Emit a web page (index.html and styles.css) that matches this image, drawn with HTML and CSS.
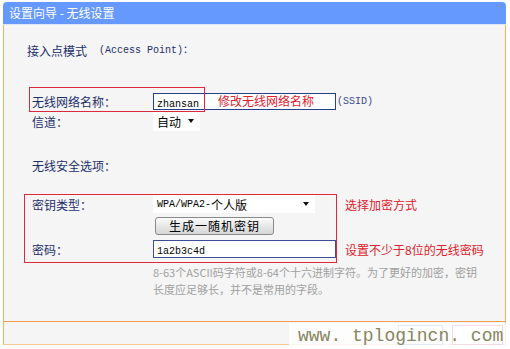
FILE: index.html
```html
<!DOCTYPE html>
<html lang="zh-CN">
<head>
    <meta charset="UTF-8">
    <title>设置向导 - 无线设置</title>
    <link rel="stylesheet" href="styles.css">
</head>
<body>
    <div class="window">
        <div class="titlebar">设置向导 - 无线设置</div>

        <div class="panel">
            <p class="heading">接入点模式 <span class="mono ap">(Access Point)：</span></p>

            <div class="row row-ssid">
                <span class="label">无线网络名称：</span>
                <div class="field">
                    <div class="input input-ssid"><span class="mono">zhansan</span></div>
                    <span class="note note-over">修改无线网络名称</span>
                </div>
                <span class="suffix mono">(SSID)</span>
            </div>

            <div class="row row-channel">
                <span class="label">信道：</span>
                <div class="select select-small">自动 <span class="arrow"></span></div>
            </div>

            <p class="section">无线安全选项：</p>

            <div class="row row-keytype">
                <span class="label">密钥类型：</span>
                <div class="control">
                    <div class="select select-wide"><span class="mono">WPA/WPA2-</span>个人版 <span class="arrow"></span></div>
                </div>
                <span class="note">选择加密方式</span>
            </div>

            <div class="row row-button">
                <span class="label"></span>
                <button type="button" class="btn-gen">生成一随机密钥</button>
            </div>

            <div class="row row-pass">
                <span class="label">密码：</span>
                <div class="control">
                    <div class="input input-pass"><span class="mono">1a2b3c4d</span></div>
                </div>
                <span class="note">设置不少于8位的无线密码</span>
            </div>

            <p class="help">8-63个ASCII码字符或8-64个十六进制字符。为了更好的加密，密钥<br>长度应足够长，并不是常用的字段。</p>

            <!-- 红色标注框 -->
            <div class="mark mark-ssid"></div>
            <div class="mark mark-security"></div>
        </div>

        <div class="footer">
            <span class="fbtn fbtn-back"></span>
            <span class="fbtn fbtn-next"></span>
            <div class="watermark">www. tplogincn. com</div>
        </div>
    </div>
</body>
</html>
```

FILE: styles.css
```css
body {
    margin: 0;
    background: #fff;
    font-family: "Noto Sans CJK SC", "DejaVu Sans", sans-serif;
    font-size: 12px;
    color: #1c2f6b;
}

p {
    margin: 0;
}

.mono {
    font-family: "Liberation Mono", "Noto Sans CJK SC", monospace;
    font-size: 10px;
}

.window {
    padding: 2px 4px 0 3px;
}

.titlebar {
    height: 22px;
    line-height: 22px;
    background: #6699fd;
    color: #fff;
    padding-left: 6px;
    border-radius: 4px 4px 0 0;
    border-bottom: 1px solid #dfe7f7;
}

.panel {
    position: relative;
    box-sizing: border-box;
    height: 297px;
    background: #f5f5f5;
    border-left: 1px solid #f2b466;
    border-right: 1px solid #f2b466;
    border-bottom: 1px solid #eda14f;
    padding: 19px 0 0 28px;
}

.heading {
    margin-left: -5px;
    height: 14px;
    line-height: 14px;
    display: flex;
    align-items: center;
}

.ap {
    margin-left: 12px;
}

.row {
    display: flex;
    align-items: center;
}

.label {
    width: 121px;
    flex-shrink: 0;
}

.control {
    width: 192px;
    flex-shrink: 0;
}

.row-ssid {
    margin-top: 34px;
    height: 19px;
}

.row-channel {
    height: 20px;
}

.section {
    margin-top: 28px;
    height: 14px;
    line-height: 14px;
}

.row-keytype {
    margin-top: 22px;
    height: 18px;
}

.row-button {
    margin-top: 4px;
    height: 18px;
}

.row-pass {
    margin-top: 5px;
    height: 18px;
}

.field {
    position: relative;
}

.input {
    box-sizing: border-box;
    height: 17px;
    width: 183px;
    background: #fff;
    border: 1px solid #243f8c;
    padding-left: 3px;
    line-height: 15px;
    color: #000;
}

.input-pass {
    height: 18px;
    border-color: #3a4f96;
    line-height: 16px;
}

.suffix {
    margin-left: 1px;
    color: #3a4a8a;
}

.select {
    box-sizing: border-box;
    display: flex;
    align-items: center;
    height: 20px;
    background: #fff;
    color: #000;
    padding-left: 4px;
}

.select-small {
    width: 47px;
}

.select-wide {
    width: 162px;
    height: 18px;
}

.arrow {
    margin-left: auto;
    margin-right: 6px;
    width: 0;
    height: 0;
    border-left: 3px solid transparent;
    border-right: 3px solid transparent;
    border-top: 4px solid #111;
}

.btn-gen {
    box-sizing: border-box;
    margin-left: 2px;
    width: 119px;
    height: 18px;
    padding: 0;
    border: 1px solid #8a8a8a;
    border-radius: 3px;
    background: linear-gradient(to bottom, #fbfbfb, #e4e4e4 60%, #d6d6d6);
    font-family: "Noto Sans CJK SC", sans-serif;
    font-size: 12px;
    letter-spacing: 1px;
    color: #000;
    line-height: 16px;
}

.note {
    color: #e0202c;
}

.note-over {
    position: absolute;
    left: 65px;
    top: 0;
    line-height: 16px;
}

.help {
    margin-top: 6px;
    margin-left: 121px;
    line-height: 17px;
    font-size: 11px;
    color: #a0a0a0;
}

.mark {
    position: absolute;
    border: 1px solid #dc2a3c;
}

.mark-ssid {
    left: 25px;
    top: 62px;
    width: 174px;
    height: 23px;
}

.mark-security {
    left: 20px;
    top: 169px;
    width: 311px;
    height: 67px;
}

.footer {
    position: relative;
    height: 23px;
    background: #f5f5f5;
    border-left: 1px solid #f2b466;
    border-right: 1px solid #f2b466;
    border-bottom: 1px solid #f5c890;
    display: flex;
    justify-content: flex-end;
    gap: 9px;
    padding: 3px 2px 0 0;
    box-sizing: border-box;
}

.fbtn {
    box-sizing: border-box;
    height: 20px;
    background: #fff;
    border: 1px solid #7b93d4;
}

.fbtn-back {
    width: 45px;
}

.fbtn-next {
    width: 51px;
    border-color: #c8506a;
}

.watermark {
    position: absolute;
    left: 285px;
    right: -4px;
    top: 1px;
    height: 26px;
    background: rgba(255, 255, 255, 0.8);
    padding-left: 9px;
    font-family: "Liberation Mono", monospace;
    font-size: 18px;
    line-height: 26px;
    color: #86865f;
}
```
